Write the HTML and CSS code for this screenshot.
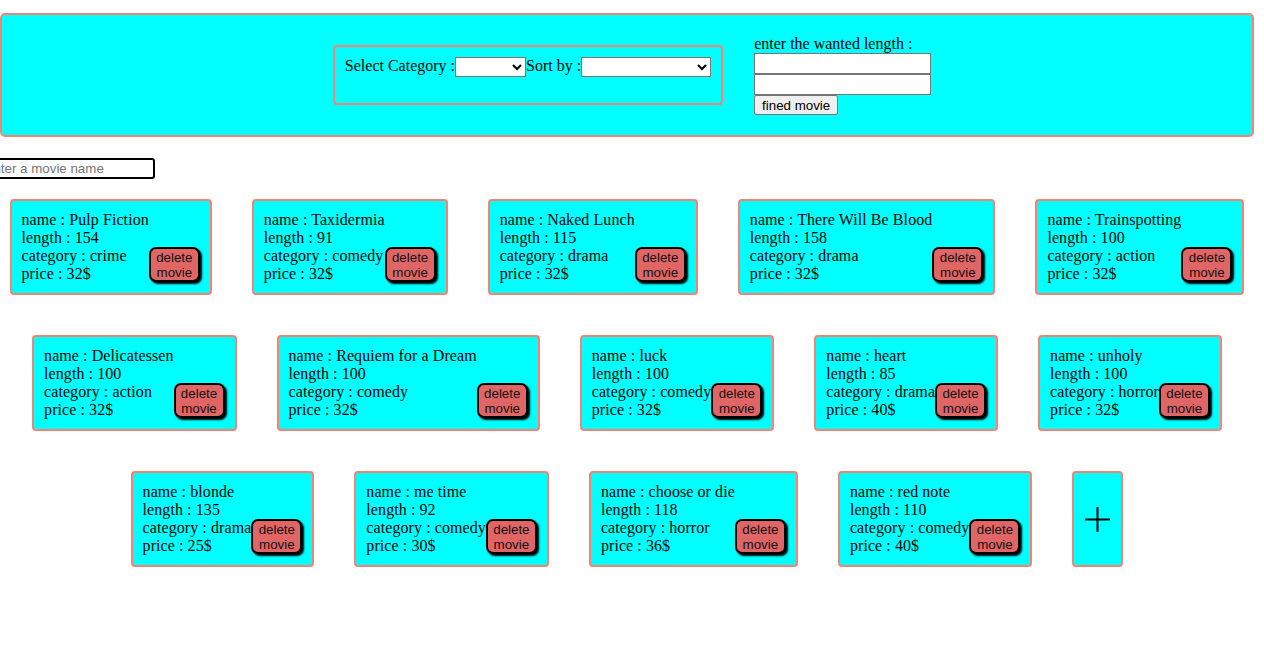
FILE: index.html
```html
<!DOCTYPE html>
<html>
<head>
<meta charset="utf-8">
<title>Movies</title>
<link rel="stylesheet" href="styles.css">
</head>
<body>
<div class="page">
  <header class="top">
    <div class="filters">
      <span class="lbl">Select Category :</span>
      <select class="sel sel-cat"><option></option></select>
      <span class="lbl">Sort by :</span>
      <select class="sel sel-sort"><option></option></select>
    </div>
    <div class="length">
      <span class="lbl">enter the wanted length :</span>
      <input class="num" type="text">
      <input class="num" type="text">
      <button class="find">fined movie</button>
    </div>
  </header>

  <input class="search" type="text" placeholder="enter a movie name">

  <main class="cards">
    <div class="card"><div class="info"><div>name : Pulp Fiction</div><div>length : 154</div><div>category : crime</div><div>price : 32$</div></div><button class="del">delete movie</button></div>
    <div class="card"><div class="info"><div>name : Taxidermia</div><div>length : 91</div><div>category : comedy</div><div>price : 32$</div></div><button class="del">delete movie</button></div>
    <div class="card"><div class="info"><div>name : Naked Lunch</div><div>length : 115</div><div>category : drama</div><div>price : 32$</div></div><button class="del">delete movie</button></div>
    <div class="card"><div class="info"><div>name : There Will Be Blood</div><div>length : 158</div><div>category : drama</div><div>price : 32$</div></div><button class="del">delete movie</button></div>
    <div class="card"><div class="info"><div>name : Trainspotting</div><div>length : 100</div><div>category : action</div><div>price : 32$</div></div><button class="del">delete movie</button></div>

    <div class="card"><div class="info"><div>name : Delicatessen</div><div>length : 100</div><div>category : action</div><div>price : 32$</div></div><button class="del">delete movie</button></div>
    <div class="card"><div class="info"><div>name : Requiem for a Dream</div><div>length : 100</div><div>category : comedy</div><div>price : 32$</div></div><button class="del">delete movie</button></div>
    <div class="card"><div class="info"><div>name : luck</div><div>length : 100</div><div>category : comedy</div><div>price : 32$</div></div><button class="del">delete movie</button></div>
    <div class="card"><div class="info"><div>name : heart</div><div>length : 85</div><div>category : drama</div><div>price : 40$</div></div><button class="del">delete movie</button></div>
    <div class="card"><div class="info"><div>name : unholy</div><div>length : 100</div><div>category : horror</div><div>price : 32$</div></div><button class="del">delete movie</button></div>

    <div class="card"><div class="info"><div>name : blonde</div><div>length : 135</div><div>category : drama</div><div>price : 25$</div></div><button class="del">delete movie</button></div>
    <div class="card"><div class="info"><div>name : me time</div><div>length : 92</div><div>category : comedy</div><div>price : 30$</div></div><button class="del">delete movie</button></div>
    <div class="card"><div class="info"><div>name : choose or die</div><div>length : 118</div><div>category : horror</div><div>price : 36$</div></div><button class="del">delete movie</button></div>
    <div class="card"><div class="info"><div>name : red note</div><div>length : 110</div><div>category : comedy</div><div>price : 40$</div></div><button class="del">delete movie</button></div>

    <div class="card add">
      <svg width="27" height="27" viewBox="0 0 27 27" aria-hidden="true"><path d="M1 13.5H26M13.5 1V26" stroke="#000" stroke-width="2" fill="none"/></svg>
    </div>
  </main>
</div>
</body>
</html>
```

FILE: styles.css
```css
html, body {
  margin: 0;
  padding: 0;
  background: #fff;
}

body {
  font-family: "Liberation Serif", "Times New Roman", serif;
  font-size: 16px;
  color: #000;
}

.page {
  width: 1254px;
  padding-top: 13px;
}

.top {
  box-sizing: border-box;
  width: 1254px;
  height: 124px;
  background: #00ffff;
  border: 2px solid #fa8072;
  border-radius: 5px;
  display: flex;
  justify-content: center;
  align-items: center;
  gap: 31px;
  padding-left: 10px;
}

.lbl {
  line-height: 18px;
  white-space: nowrap;
}

.filters {
  box-sizing: border-box;
  height: 60px;
  border: 2px solid #fa8072;
  border-radius: 4px;
  padding: 10px;
  display: flex;
  align-items: flex-start;
}

.sel {
  box-sizing: border-box;
  height: 20px;
  margin: 0;
  font-family: "Liberation Sans", Arial, sans-serif;
  font-size: 13px;
  background: #fff;
  border: 1px solid #767676;
  border-radius: 0;
}

.sel-cat { width: 71px; }
.sel-sort { width: 130px; }

.length {
  display: flex;
  flex-direction: column;
  align-items: flex-start;
}

.num {
  box-sizing: border-box;
  width: 177px;
  height: 21px;
  margin: 0;
  border: 1px solid #767676;
  background: #fff;
  padding: 1px 2px;
}

.find {
  box-sizing: border-box;
  height: 20px;
  width: 84px;
  margin: 0;
  padding: 0 6px;
  font-family: "Liberation Sans", Arial, sans-serif;
  font-size: 13.33px;
  color: #000;
  background: #efefef;
  border: 1px solid #767676;
  border-radius: 2px;
}

.search {
  display: block;
  box-sizing: border-box;
  width: 173px;
  height: 21px;
  margin: 21px 0 0 -18px;
  padding: 1px 2px;
  border: 2px solid #000;
  border-radius: 3px;
  font-family: "Liberation Sans", Arial, sans-serif;
  font-size: 13.33px;
}

.search::placeholder {
  color: #757575;
}

.cards {
  width: 1254px;
  margin-top: 20px;
  display: flex;
  flex-wrap: wrap;
  justify-content: center;
  gap: 40px;
}

.card {
  box-sizing: border-box;
  height: 96px;
  background: #00ffff;
  border: 2px solid #fa8072;
  border-radius: 4px;
  padding: 10px;
  display: flex;
  align-items: flex-end;
}

.info {
  line-height: 18px;
  white-space: nowrap;
  letter-spacing: 0.08px;
}

.del {
  box-sizing: border-box;
  width: 51px;
  height: 35px;
  margin: 0 0 1px 0;
  padding: 0 3px;
  background: #e06666;
  color: #111;
  border: 2px solid #000;
  border-radius: 7px;
  box-shadow: 2px 2px 2px #000;
  font-family: "Liberation Sans", Arial, sans-serif;
  font-size: 13.33px;
  line-height: 15px;
}

.add {
  width: 51px;
  padding: 0;
  justify-content: center;
  align-items: center;
}

.add svg {
  display: block;
}
```
